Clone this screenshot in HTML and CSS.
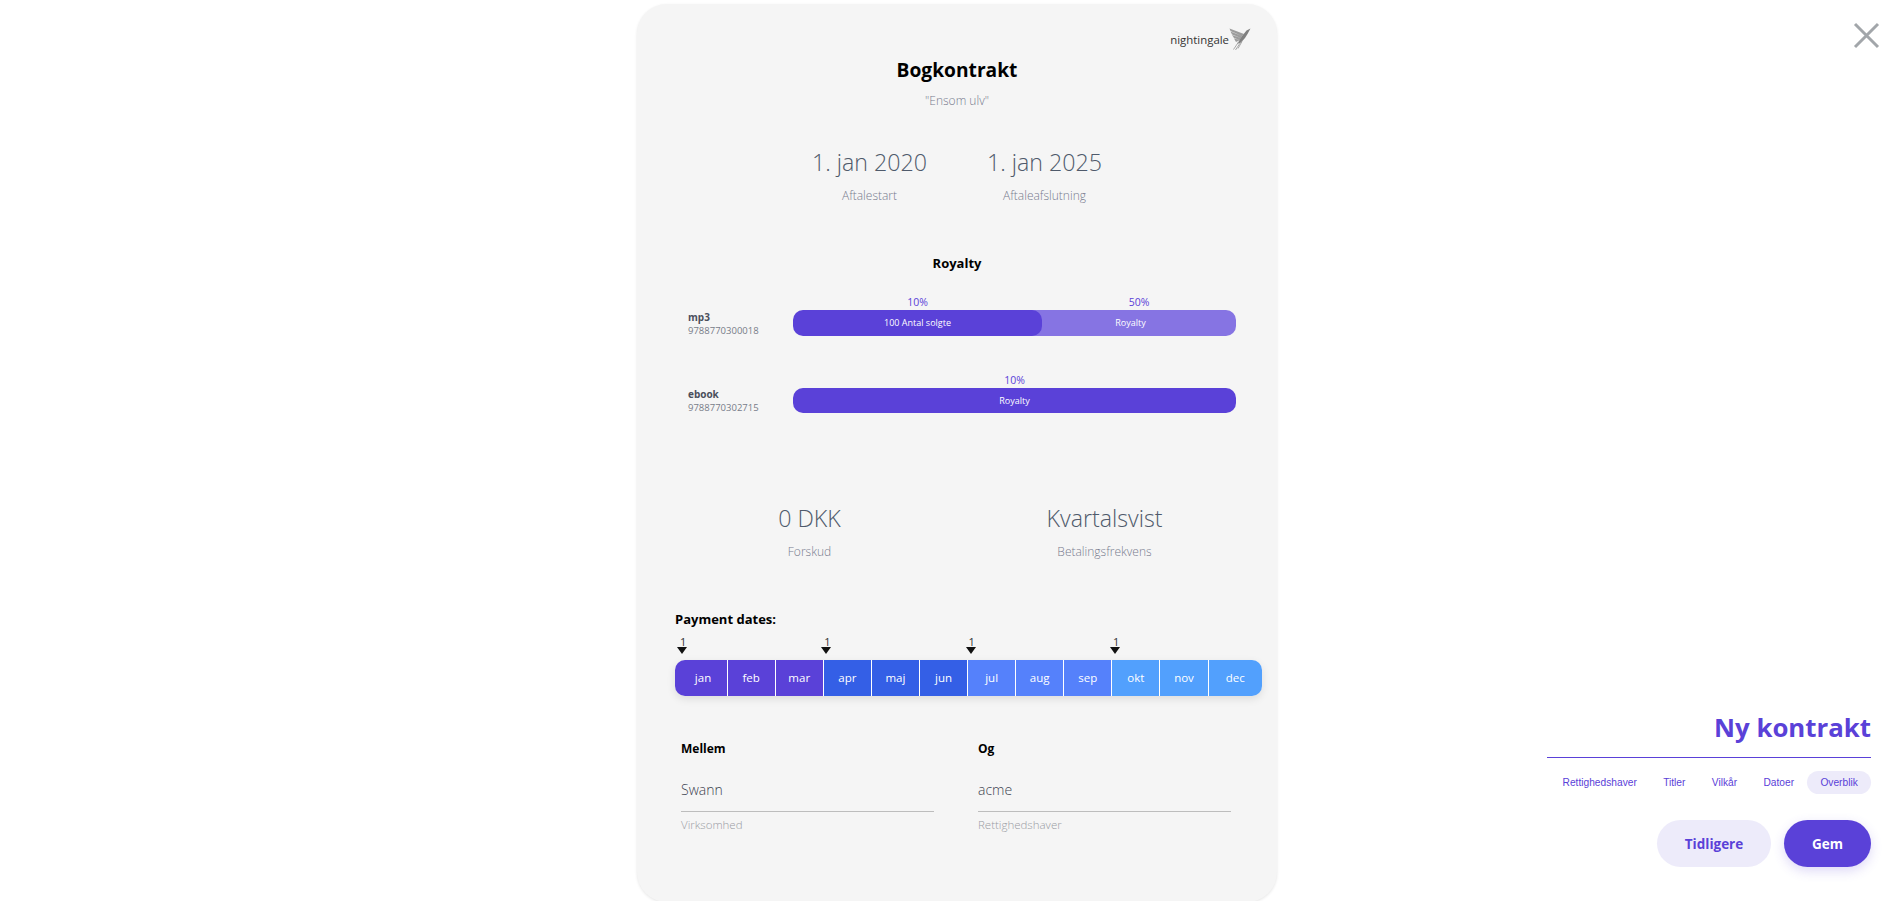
FILE: index.html
```html
<!DOCTYPE html>
<html lang="da">
<head>
    <meta charset="UTF-8">
    <meta name="viewport" content="width=device-width, initial-scale=1.0">
    <title>Ny kontrakt</title>
    <link rel="stylesheet" href="styles.css">
</head>
<body>
    <button class="close-btn" aria-label="Luk">
        <svg width="27" height="27" viewBox="0 0 27 27">
            <path d="M2 2 L25 25 M25 2 L2 25" stroke="#a2a6aa" stroke-width="3" fill="none"/>
        </svg>
    </button>

    <main class="contract-card">
        <div class="logo">
            <span class="logo-text">nightingale</span>
            <svg width="22" height="22" viewBox="0 0 22 22">
                <!-- vinge -->
                <path d="M15 6 L0.5 0.5 L1.5 3 L13 8 Z M13 8 L1.5 3.5 L3 6.5 L12 10 Z M12 10 L3 7 L5 10 L11 12 Z M11 12 L5 10.5 L7 14 Z" fill="#9c9c9c"/>
                <!-- krop og hoved -->
                <path d="M21.5 0.5 L17.5 2.5 L15.5 5 L13 8 L10 13 L8 16 L12 14.5 L16 10 L18.5 6 Z" fill="#808080"/>
                <!-- hale -->
                <path d="M9.5 14 L4.5 21.5 M11.5 14.5 L6.5 22 M13 13.5 L9 20.5" stroke="#a0a0a0" stroke-width="0.9" fill="none"/>
            </svg>
        </div>

        <h1 class="contract-title">Bogkontrakt</h1>
        <p class="contract-subtitle">"Ensom ulv"</p>

        <div class="dates">
            <div class="stat">
                <div class="stat-value">1. jan 2020</div>
                <div class="stat-label">Aftalestart</div>
            </div>
            <div class="stat">
                <div class="stat-value">1. jan 2025</div>
                <div class="stat-label">Aftaleafslutning</div>
            </div>
        </div>

        <h2 class="section-title">Royalty</h2>

        <div class="royalty-row">
            <div class="royalty-label">
                <strong>mp3</strong>
                <span>9788770300018</span>
            </div>
            <div class="royalty-bars">
                <div class="segment segment-first">
                    <div class="segment-percent">10%</div>
                    <div class="segment-bar">100 Antal solgte</div>
                </div>
                <div class="segment segment-second">
                    <div class="segment-percent">50%</div>
                    <div class="segment-bar">Royalty</div>
                </div>
            </div>
        </div>

        <div class="royalty-row royalty-row-second">
            <div class="royalty-label">
                <strong>ebook</strong>
                <span>9788770302715</span>
            </div>
            <div class="royalty-bars">
                <div class="segment segment-full">
                    <div class="segment-percent">10%</div>
                    <div class="segment-bar">Royalty</div>
                </div>
            </div>
        </div>

        <div class="terms">
            <div class="stat">
                <div class="stat-value">0 DKK</div>
                <div class="stat-label">Forskud</div>
            </div>
            <div class="stat">
                <div class="stat-value">Kvartalsvist</div>
                <div class="stat-label">Betalingsfrekvens</div>
            </div>
        </div>

        <div class="payment">
            <h3 class="payment-title">Payment dates:</h3>
            <div class="payment-marks">
                <div class="mark"><span>1</span><i class="arrow"></i></div>
                <div class="mark"><span>1</span><i class="arrow"></i></div>
                <div class="mark"><span>1</span><i class="arrow"></i></div>
                <div class="mark"><span>1</span><i class="arrow"></i></div>
            </div>
            <div class="months">
                <div class="month q1">jan</div>
                <div class="month q1">feb</div>
                <div class="month q1">mar</div>
                <div class="month q2">apr</div>
                <div class="month q2">maj</div>
                <div class="month q2">jun</div>
                <div class="month q3">jul</div>
                <div class="month q3">aug</div>
                <div class="month q3">sep</div>
                <div class="month q4">okt</div>
                <div class="month q4">nov</div>
                <div class="month q4">dec</div>
            </div>
        </div>

        <div class="parties">
            <div class="party">
                <h4 class="party-title">Mellem</h4>
                <div class="party-value">Swann</div>
                <div class="party-label">Virksomhed</div>
            </div>
            <div class="party">
                <h4 class="party-title">Og</h4>
                <div class="party-value">acme</div>
                <div class="party-label">Rettighedshaver</div>
            </div>
        </div>
    </main>

    <aside class="wizard">
        <div class="wizard-title">Ny kontrakt</div>
        <nav class="wizard-tabs">
            <a class="tab">Rettighedshaver</a>
            <a class="tab">Titler</a>
            <a class="tab">Vilkår</a>
            <a class="tab">Datoer</a>
            <a class="tab active">Overblik</a>
        </nav>
        <div class="wizard-actions">
            <button class="btn btn-light">Tidligere</button>
            <button class="btn btn-primary">Gem</button>
        </div>
    </aside>
</body>
</html>
```

FILE: styles.css
```css
:root {
    --purple: #5a41d8;
    --purple-light: #8674e3;
    --purple-pale: #edebfa;
    --text-soft: #4f5a6b;
    --text-muted: #777b8e;
}

* {
    box-sizing: border-box;
}

html, body {
    height: 901px;
    overflow: hidden;
}

body {
    margin: 0;
    background-color: #fff;
    font-family: "Open Sans", sans-serif;
    color: #000;
    display: flex;
    position: relative;
}

.close-btn {
    position: absolute;
    top: 22px;
    right: 7px;
    padding: 0;
    border: none;
    background: none;
    line-height: 0;
}

.contract-card {
    width: 640px;
    height: 898px;
    margin: 4px 0 0 637px;
    padding-top: 24px;
    flex-shrink: 0;
    background-color: #f5f5f5;
    border-radius: 30px;
    box-shadow: 0 1px 3px rgba(0, 0, 0, 0.1);
}

.logo {
    display: flex;
    justify-content: flex-end;
    align-items: center;
    height: 22px;
    padding-right: 26px;
}

.logo-text {
    font-size: 11.4px;
    font-weight: 500;
    color: #333;
}

.contract-title {
    margin: 6px 0 0;
    font-size: 19.2px;
    line-height: 28px;
    font-weight: 700;
    text-align: center;
}

.contract-subtitle {
    margin: 8px 0 0;
    font-size: 12px;
    line-height: 18px;
    font-weight: 300;
    color: var(--text-muted);
    text-align: center;
}

.dates {
    display: flex;
    justify-content: center;
    margin-top: 36px;
}

.dates .stat {
    width: 175px;
}

.terms {
    display: flex;
    justify-content: center;
    margin-top: 89px;
}

.terms .stat {
    width: 295px;
}

.stat {
    text-align: center;
}

.stat-value {
    font-size: 23.2px;
    line-height: 32px;
    font-weight: 300;
    color: var(--text-soft);
}

.stat-label {
    margin-top: 9px;
    font-size: 12px;
    line-height: 18px;
    font-weight: 300;
    color: var(--text-muted);
}

.section-title {
    margin: 48px 0 0;
    font-size: 13px;
    line-height: 20px;
    font-weight: 700;
    text-align: center;
}

.royalty-row {
    display: flex;
    align-items: flex-end;
    margin: 21px 0 0 51px;
}

.royalty-row-second {
    margin-top: 36px;
}

.royalty-label {
    width: 105px;
    margin-bottom: -1px;
    display: flex;
    flex-direction: column;
    font-size: 9.5px;
    line-height: 13px;
    color: #777c88;
}

.royalty-label strong {
    font-size: 10px;
    color: #4a4f5c;
    font-weight: 700;
}

.royalty-bars {
    display: flex;
    width: 443px;
}

.segment-first {
    width: 249px;
    position: relative;
    z-index: 1;
}

.segment-second {
    flex: 1;
}

.segment-full {
    width: 100%;
}

.segment-percent {
    font-size: 10.5px;
    line-height: 16px;
    color: var(--purple);
    text-align: center;
}

.segment-bar {
    height: 26px;
    line-height: 26px;
    font-size: 9px;
    color: #fff;
    text-align: center;
    background-color: var(--purple);
    border-radius: 10px;
}

.segment-full .segment-bar {
    height: 25px;
    line-height: 25px;
}

.segment-second .segment-bar {
    margin-left: -10px;
    padding-right: 7px;
    background-color: var(--purple-light);
    border-radius: 0 10px 10px 0;
}

.payment {
    margin: 48px 0 0 38px;
    width: 587px;
}

.payment-title {
    margin: 0;
    font-size: 13px;
    line-height: 20px;
    font-weight: 700;
}

.payment-marks {
    display: flex;
    height: 31px;
    padding: 6px 0 0 2px;
}

.mark {
    width: 144.3px;
    display: flex;
    flex-direction: column;
    align-items: flex-start;
    font-size: 11px;
    line-height: 13px;
    color: #333;
}

.mark span {
    padding-left: 3px;
}

.arrow {
    width: 0;
    height: 0;
    margin-top: -1px;
    border-left: 5px solid transparent;
    border-right: 5px solid transparent;
    border-top: 7px solid #111;
}

.months {
    display: flex;
    height: 36px;
    border-radius: 10px;
    overflow: hidden;
    box-shadow: 0 3px 8px rgba(0, 0, 0, 0.1);
}

.month {
    width: 48.1px;
    font-size: 11.5px;
    line-height: 36px;
    color: #fff;
    text-align: center;
    border-right: 1px solid #fff;
}

.month:first-child {
    width: 52.6px;
    padding-left: 4.5px;
}

.month:last-child {
    flex: 1;
    border-right: none;
}

.q1 { background-color: #5a41d8; }
.q2 { background-color: #345fe6; }
.q3 { background-color: #5581fb; }
.q4 { background-color: #52a0fd; }

.parties {
    display: flex;
    gap: 44px;
    margin: 43px 0 0 44px;
}

.party {
    width: 253px;
}

.party-title {
    margin: 0;
    font-size: 12px;
    line-height: 20px;
    font-weight: 700;
}

.party-value {
    margin-top: 21px;
    padding-bottom: 11px;
    font-size: 14px;
    line-height: 20px;
    font-weight: 300;
    color: #3d4350;
    border-bottom: 1px solid #bdbdbd;
}

.party-label {
    margin-top: 4px;
    font-size: 11.5px;
    line-height: 18px;
    font-weight: 300;
    color: #9a9ca4;
}

.wizard {
    width: 324px;
    margin: 0 16px 34px auto;
    align-self: flex-end;
}

.wizard-title {
    font-size: 25.8px;
    line-height: 36px;
    font-weight: 700;
    color: var(--purple);
    text-align: right;
    padding-bottom: 12px;
    border-bottom: 1px solid var(--purple);
}

.wizard-tabs {
    display: flex;
    justify-content: flex-end;
    margin-top: 13px;
}

.tab {
    padding: 0 13.2px;
    height: 23px;
    font-family: "Liberation Sans", Arial, sans-serif;
    font-size: 10.2px;
    line-height: 23px;
    color: var(--purple);
    border-radius: 12px;
}

.tab.active {
    background-color: var(--purple-pale);
}

.wizard-actions {
    display: flex;
    justify-content: flex-end;
    gap: 13px;
    margin-top: 26px;
}

.btn {
    height: 47px;
    border: none;
    border-radius: 24px;
    font-family: inherit;
    font-size: 13.5px;
    font-weight: 700;
}

.btn-light {
    width: 114px;
    background-color: var(--purple-pale);
    color: var(--purple);
}

.btn-primary {
    width: 87px;
    background-color: var(--purple);
    color: #fff;
    box-shadow: 0 4px 12px rgba(90, 65, 216, 0.2);
}
```
